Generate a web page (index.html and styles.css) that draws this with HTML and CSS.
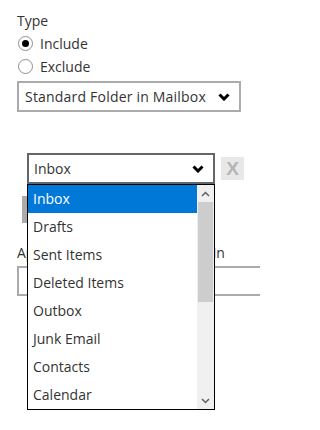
FILE: index.html
```html
<!DOCTYPE html>
<html>
<head>
<meta charset="utf-8">
<link rel="stylesheet" href="styles.css">
</head>
<body>
<div class="page">
  <div class="label">Type</div>
  <label class="radio-row"><span class="radio checked"></span><span>Include</span></label>
  <label class="radio-row"><span class="radio"></span><span>Exclude</span></label>
  <div class="select std">
    <span class="select-text">Standard Folder in Mailbox</span>
    <svg class="chev" width="12" height="8" viewBox="0 0 12 8"><polyline points="1.5,1.5 6,6 10.5,1.5" fill="none" stroke="#000" stroke-width="3"/></svg>
  </div>

  <div class="folder-row">
    <div class="select-wrap">
      <div class="select inbox">
        <span class="select-text">Inbox</span>
        <svg class="chev" width="12" height="8" viewBox="0 0 12 8"><polyline points="1.5,1.5 6,6 10.5,1.5" fill="none" stroke="#000" stroke-width="3"/></svg>
      </div>
      <div class="dropdown">
        <ul class="options">
          <li class="selected">Inbox</li>
          <li>Drafts</li>
          <li>Sent Items</li>
          <li>Deleted Items</li>
          <li>Outbox</li>
          <li>Junk Email</li>
          <li>Contacts</li>
          <li>Calendar</li>
        </ul>
        <div class="scrollbar">
          <svg class="arrow" width="9" height="6" viewBox="0 0 9 6"><polyline points="1,5 4.5,1.5 8,5" fill="none" stroke="#606060" stroke-width="1.5"/></svg>
          <div class="track"><div class="thumb"></div></div>
          <svg class="arrow" width="9" height="6" viewBox="0 0 9 6"><polyline points="1,1 4.5,4.5 8,1" fill="none" stroke="#606060" stroke-width="1.5"/></svg>
        </div>
      </div>
    </div>
    <div class="remove">X</div>
  </div>

  <div class="add-btn"></div>
  <div class="label apply">Apply to the selected mailbox in</div>
  <div class="input-clip"><div class="text-input"></div></div>
</div>
</body>
</html>
```
FILE: styles.css
```css
html, body {
  margin: 0;
  padding: 0;
  background: #fff;
}
.page {
  width: 260px;
  height: 430px;
  box-sizing: border-box;
  padding: 9px 0 0 17px;
  font-family: "Open Sans", "Noto Sans", sans-serif;
  font-size: 14px;
  color: #333;
}
.label {
  line-height: 23px;
  height: 23px;
  white-space: nowrap;
}
.radio-row {
  display: flex;
  align-items: center;
  height: 23px;
  line-height: 23px;
  gap: 7px;
}
.radio {
  width: 15px;
  height: 15px;
  box-sizing: border-box;
  border: 1px solid #8f8f8f;
  border-radius: 50%;
  margin-left: 1px;
  display: flex;
  align-items: center;
  justify-content: center;
  background: #fff;
}
.radio.checked::after {
  content: "";
  width: 7px;
  height: 7px;
  border-radius: 50%;
  background: #000;
}
.select {
  box-sizing: border-box;
  height: 31px;
  display: flex;
  align-items: center;
  justify-content: space-between;
  background: #fff;
  white-space: nowrap;
}
.select.std {
  margin-top: 3px;
  width: 224px;
  border: 2px solid #ababab;
  padding: 0 9px 0 6px;
}
.select.std .select-text {
  letter-spacing: 0.2px;
}
.select.inbox {
  width: 188px;
  border: 2px solid #666;
  padding: 0 9px 0 5px;
}
.chev {
  display: block;
}
.folder-row {
  display: flex;
  align-items: flex-start;
  margin-top: 41px;
  margin-left: 10px;
}
.select-wrap {
  position: relative;
}
.remove {
  margin-left: 6px;
  margin-top: 4px;
  width: 23px;
  height: 23px;
  background: #e8e8e8;
  color: #b5b5b5;
  font-family: "Liberation Sans", sans-serif;
  font-weight: bold;
  font-size: 19px;
  line-height: 23px;
  text-align: center;
}
.dropdown {
  position: absolute;
  left: 0;
  top: 31px;
  width: 188px;
  box-sizing: border-box;
  border: 1px solid #000;
  background: #fff;
  display: flex;
  z-index: 2;
}
.options {
  list-style: none;
  margin: 0;
  padding: 0;
  flex: 1;
}
.options li {
  height: 28px;
  line-height: 28px;
  padding-left: 5px;
  color: #333;
}
.options li.selected {
  background: #0078d7;
  color: #fff;
}
.scrollbar {
  width: 17px;
  background: #f0f0f0;
  display: flex;
  flex-direction: column;
  align-items: center;
}
.arrow {
  display: block;
  margin: 6px 0 5px;
}
.track {
  flex: 1;
  width: 100%;
  display: flex;
  justify-content: center;
}
.thumb {
  width: 15px;
  height: 100px;
  background: #cdcdcd;
}
.add-btn {
  margin-top: 12px;
  margin-left: 5px;
  width: 70px;
  height: 27px;
  background: #ababab;
}
.apply {
  margin-top: 18px;
}
.input-clip {
  margin-top: 2px;
  width: 243px;
  overflow: hidden;
}
.text-input {
  width: 260px;
  height: 30px;
  box-sizing: border-box;
  border: 2px solid #ababab;
}
```
